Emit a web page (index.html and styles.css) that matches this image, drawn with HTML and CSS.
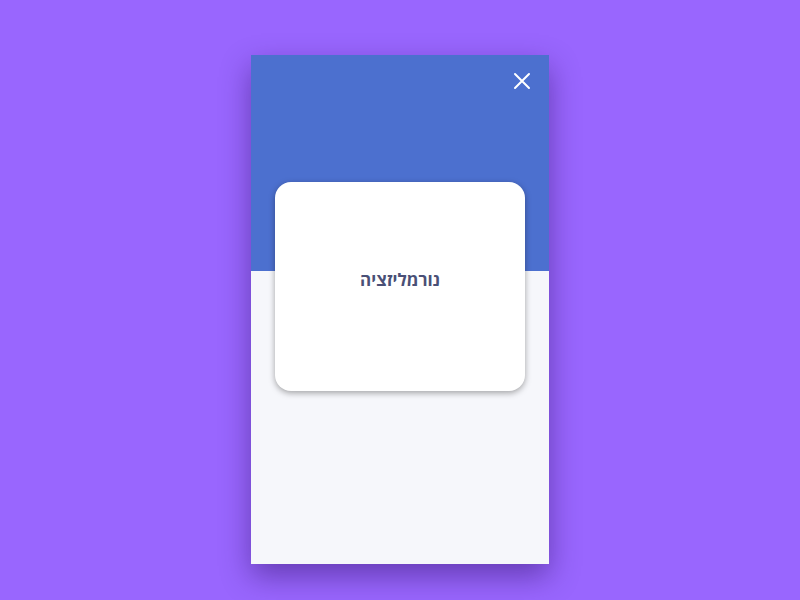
FILE: index.html
```html
<!DOCTYPE html>
<html lang="he">
<head>
<meta charset="utf-8">
<link rel="stylesheet" href="styles.css">
</head>
<body>
<div class="stage">
  <div class="panel">
    <div class="panel-top">
      <button class="close" aria-label="close">
        <svg width="18" height="18" viewBox="0 0 18 18"><path d="M2 2 L16 16 M16 2 L2 16" stroke="#fff" stroke-width="2" stroke-linecap="round"/></svg>
      </button>
    </div>
    <div class="panel-bottom"></div>
    <div class="card"><span class="card-text" dir="rtl">נורמליזציה</span></div>
  </div>
</div>
</body>
</html>
```
FILE: styles.css
```css
html, body { margin: 0; padding: 0; }
body { background: #9966fe; font-family: "Open Sans", "Noto Sans", "DejaVu Sans", sans-serif; }
.stage { width: 800px; height: 600px; display: flex; justify-content: center; align-items: flex-start; }
.panel {
  margin-top: 55px;
  width: 298px; height: 509px;
  position: relative;
  display: flex; flex-direction: column;
  box-shadow: 0 12px 28px rgba(40, 10, 90, 0.45);
}
.panel-top { height: 216px; background: #4c70cf; display: flex; justify-content: flex-end; align-items: flex-start; }
.panel-bottom { flex: 1; background: #f6f7fb; }
.close { background: none; border: 0; padding: 0; margin: 17px 18px 0 0; width: 18px; height: 18px; display: block; cursor: pointer; }
.close svg { display: block; }
.card {
  position: absolute; left: 24px; top: 127px;
  width: 250px; height: 209px;
  background: #fff; border-radius: 16px;
  box-shadow: 0 2px 6px rgba(0,0,0,0.35);
  display: flex; align-items: center; justify-content: center;
}
.card-text { font-size: 17px; font-weight: 700; color: #4a5076; margin-top: -15px; }
```
